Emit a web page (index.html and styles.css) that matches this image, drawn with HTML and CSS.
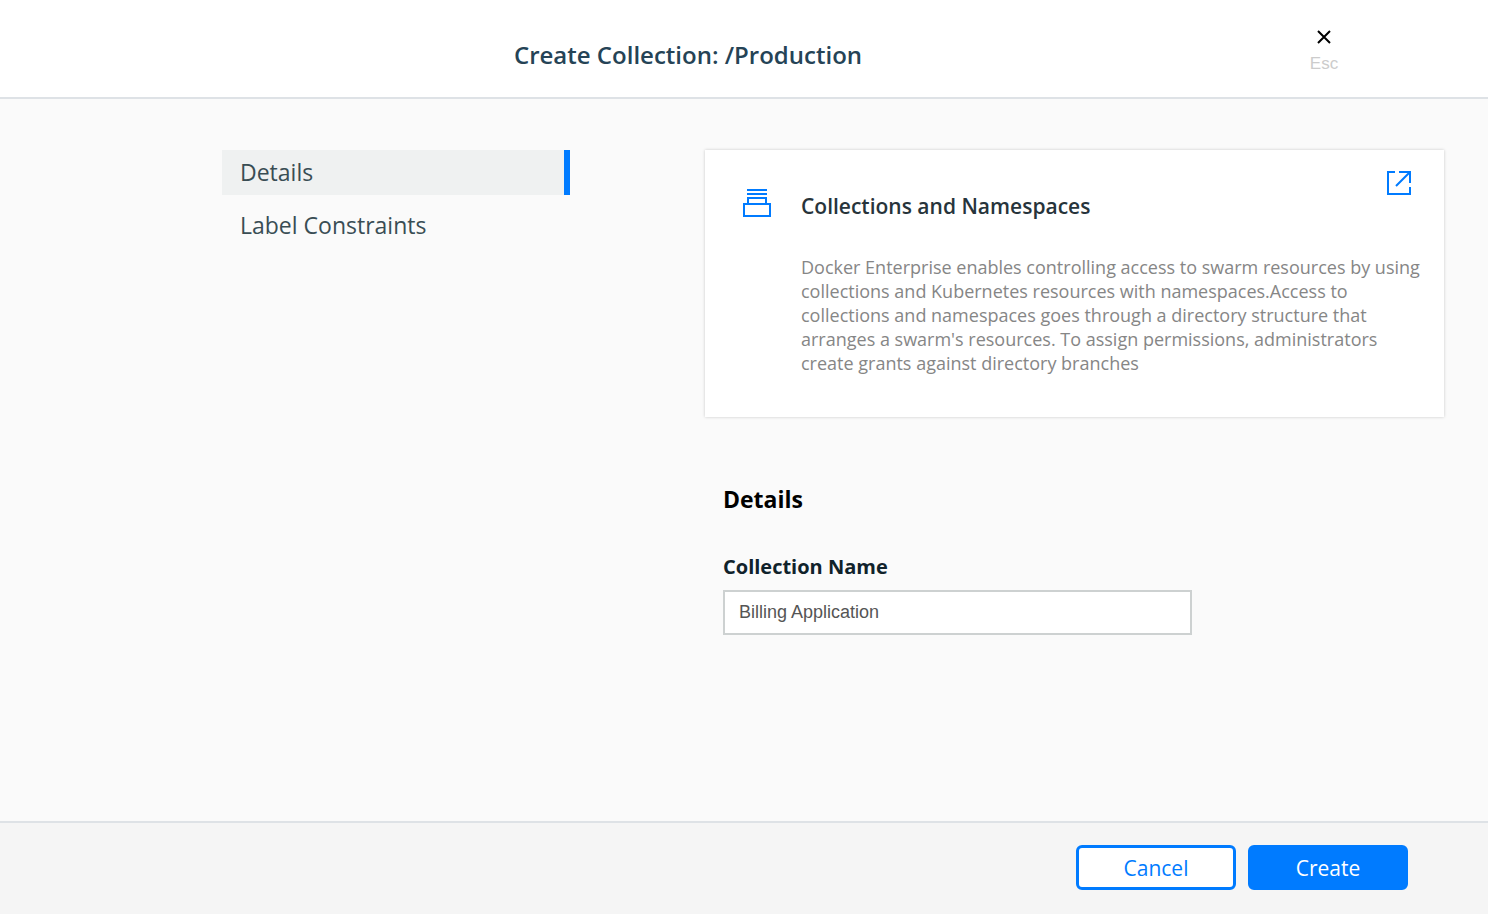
FILE: index.html
```html
<!DOCTYPE html>
<html lang="en">
<head>
    <meta charset="UTF-8">
    <meta name="viewport" content="width=device-width, initial-scale=1.0">
    <title>Create Collection</title>
    <link rel="stylesheet" href="styles.css">
</head>
<body>
    <header class="page-header">
        <h1>Create Collection: /Production</h1>
        <button type="button" class="close-button">
            <svg width="14" height="14" viewBox="0 0 14 14" aria-hidden="true">
                <path d="M1 1L13 13M13 1L1 13" fill="none" stroke="#000" stroke-width="2"/>
            </svg>
            <span>Esc</span>
        </button>
    </header>
    <main class="page-main">
        <nav class="side-nav">
            <a href="#details" class="active">Details</a>
            <a href="#label-constraints">Label Constraints</a>
        </nav>
        <div class="content">
            <section class="info-card">
                <svg class="card-icon" width="28" height="28" viewBox="0 0 28 28" aria-hidden="true">
                    <path d="M4 1H24M4 5H24M5 14V9H23V14M1 15H27V27H1Z" fill="none" stroke="#007bff" stroke-width="2"/>
                </svg>
                <div class="card-text">
                    <h2>Collections and Namespaces</h2>
                    <p>Docker Enterprise enables controlling access to swarm resources by using collections and Kubernetes resources with namespaces.Access to collections and namespaces goes through a directory structure that arranges a swarm's resources. To assign permissions, administrators create grants against directory branches</p>
                </div>
                <a href="#docs" class="card-link" aria-label="Open documentation">
                    <svg width="24" height="24" viewBox="0 0 24 24" aria-hidden="true">
                        <path d="M8 1H1V23H23V16M12 1H23V12M9 15L23 1" fill="none" stroke="#007bff" stroke-width="2"/>
                    </svg>
                </a>
            </section>
            <form id="collection-form" class="details-form">
                <h2>Details</h2>
                <label for="collection-name">Collection Name</label>
                <input type="text" id="collection-name" value="Billing Application">
            </form>
        </div>
    </main>
    <footer class="page-footer">
        <button type="button" class="btn btn-cancel">Cancel</button>
        <button type="submit" form="collection-form" class="btn btn-create">Create</button>
    </footer>
</body>
</html>
```
FILE: styles.css
```css
* {
    box-sizing: border-box;
}

body {
    font-family: "Open Sans", sans-serif;
    background-color: #fafafa;
    margin: 0;
    display: flex;
    flex-direction: column;
    min-height: 100vh;
}

h1, h2, p {
    margin: 0;
}

svg {
    display: block;
}

.page-header {
    display: flex;
    align-items: flex-start;
    padding: 30px 150px 17px 66px;
    background-color: #ffffff;
    border-bottom: 2px solid #dee2e6;
}

.page-header h1 {
    flex: 1;
    padding-top: 7px;
    font-size: 24px;
    font-weight: 600;
    line-height: 36px;
    text-align: center;
    color: #254356;
}

.close-button {
    display: flex;
    flex-direction: column;
    align-items: center;
    gap: 8px;
    width: 28px;
    height: 50px;
    padding: 0;
    border: none;
    background: none;
    font-family: "Liberation Sans", sans-serif;
    font-size: 17px;
    line-height: 24px;
    color: #cccccc;
    cursor: pointer;
}

.page-main {
    flex: 1;
    display: flex;
    align-items: flex-start;
    gap: 135px;
    padding: 51px 44px 40px 222px;
}

.side-nav {
    width: 348px;
    display: flex;
    flex-direction: column;
    gap: 8px;
}

.side-nav a {
    padding: 0 18px;
    border-right: 6px solid transparent;
    font-size: 23px;
    line-height: 45px;
    color: #394d54;
    text-decoration: none;
}

.side-nav a.active {
    background-color: #eff1f1;
    border-right-color: #007bff;
}

.content {
    flex: 1;
}

.info-card {
    display: flex;
    align-items: flex-start;
    position: relative;
    padding: 39px 24px 42px 38px;
    background-color: #ffffff;
    box-shadow: 0 0 3px rgba(0, 0, 0, 0.2);
}

.card-icon {
    flex: none;
    margin-right: 30px;
}

.card-text h2 {
    margin-bottom: 32px;
    font-size: 21px;
    font-weight: 600;
    line-height: 34px;
    color: #27343b;
}

.card-text p {
    font-size: 18px;
    line-height: 24px;
    color: #868686;
}

.card-link {
    position: absolute;
    top: 21px;
    right: 33px;
}

.details-form {
    display: flex;
    flex-direction: column;
    align-items: flex-start;
    padding: 64px 18px 0;
}

.details-form h2 {
    margin-bottom: 34px;
    font-size: 23px;
    font-weight: bold;
    line-height: 36px;
    color: #000000;
}

.details-form label {
    margin-bottom: 7px;
    font-size: 20px;
    font-weight: bold;
    line-height: 32px;
    color: #10222b;
}

.details-form input {
    width: 469px;
    max-width: 100%;
    height: 45px;
    padding: 0 14px;
    border: 2px solid #cdd1d1;
    background-color: #ffffff;
    font-family: "Liberation Sans", sans-serif;
    font-size: 18px;
    color: #555555;
}

.page-footer {
    display: flex;
    justify-content: flex-end;
    gap: 12px;
    padding: 22px 80px 24px;
    background-color: #f5f5f5;
    border-top: 2px solid #dee2e6;
}

.btn {
    width: 160px;
    height: 45px;
    padding: 0;
    border: 3px solid #007bff;
    border-radius: 6px;
    font-family: inherit;
    font-size: 21px;
    cursor: pointer;
}

.btn-cancel {
    background-color: #ffffff;
    color: #007bff;
}

.btn-create {
    background-color: #007bff;
    color: #ffffff;
}
```
